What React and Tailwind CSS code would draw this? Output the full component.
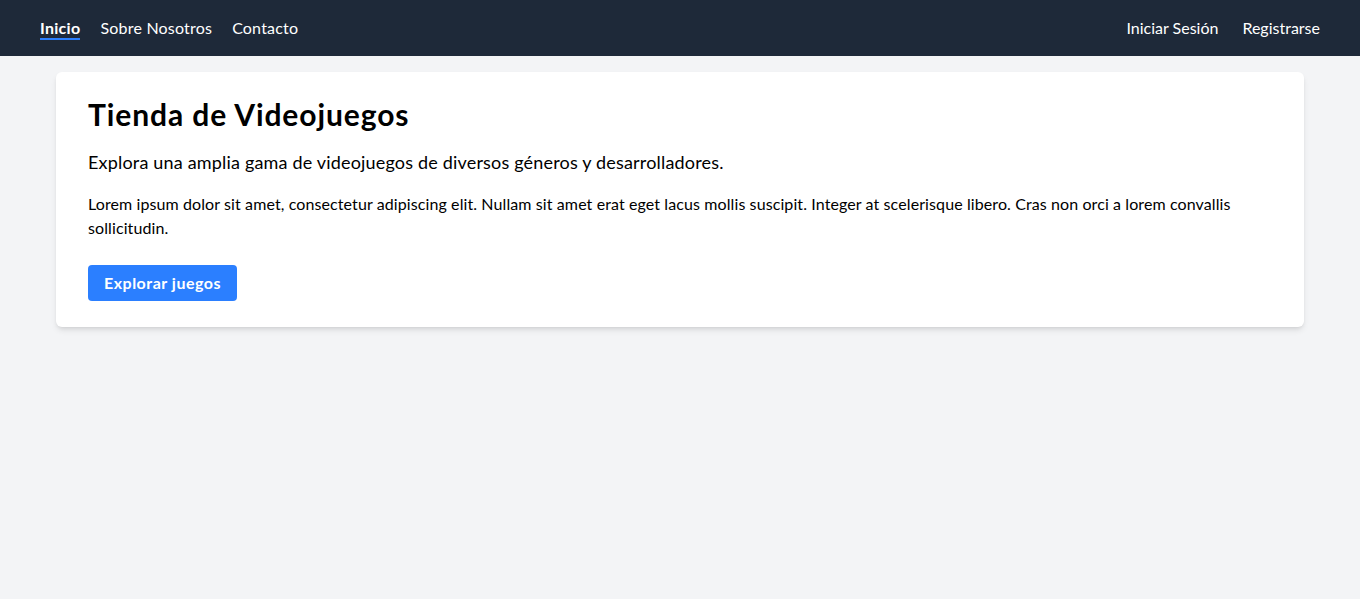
import React from 'react';

const NavLink = ({ children, active, tight }) => (
    <a
        href="#"
        className={
            active
                ? 'text-white font-bold leading-5 pt-px border-b-2 border-blue-500 tracking-[0.3px]'
                : tight
                ? 'text-white leading-5 pt-px border-b-2 border-transparent'
                : 'text-white leading-5 pt-px border-b-2 border-transparent tracking-[0.2px]'
        }
    >
        {children}
    </a>
);

const App = () => {
    return (
        <div
            className="min-h-screen bg-gray-100 text-black"
            style={{ fontFamily: '"Segoe UI", Lato, "Open Sans", sans-serif' }}
        >
            <nav className="bg-gray-800 h-14 px-10 flex items-center justify-between text-base">
                <div className="flex items-center gap-5">
                    <NavLink active>Inicio</NavLink>
                    <NavLink>Sobre Nosotros</NavLink>
                    <NavLink>Contacto</NavLink>
                </div>
                <div className="flex items-center gap-6">
                    <NavLink tight>Iniciar Sesión</NavLink>
                    <NavLink tight>Registrarse</NavLink>
                </div>
            </nav>

            <main className="container mx-auto px-4 py-4">
                <div className="bg-white rounded-md shadow-md px-8 pt-6 pb-[26px]">
                    <h1 className="text-3xl font-bold mb-4 tracking-[0.9px]">Tienda de Videojuegos</h1>
                    <p className="text-lg mb-4 tracking-[0.18px]">
                        Explora una amplia gama de videojuegos de diversos géneros y desarrolladores.
                    </p>
                    <p className="text-base mb-[25px] tracking-[0.1px]">
                        Lorem ipsum dolor sit amet, consectetur adipiscing elit. Nullam sit amet erat eget
                        lacus mollis suscipit. Integer at scelerisque libero. Cras non orci a lorem
                        convallis sollicitudin.
                    </p>
                    <button className="bg-blue-500 text-white font-bold px-4 py-1.5 rounded tracking-[0.5px]">
                        Explorar juegos
                    </button>
                </div>
            </main>
        </div>
    );
};

export default App;
